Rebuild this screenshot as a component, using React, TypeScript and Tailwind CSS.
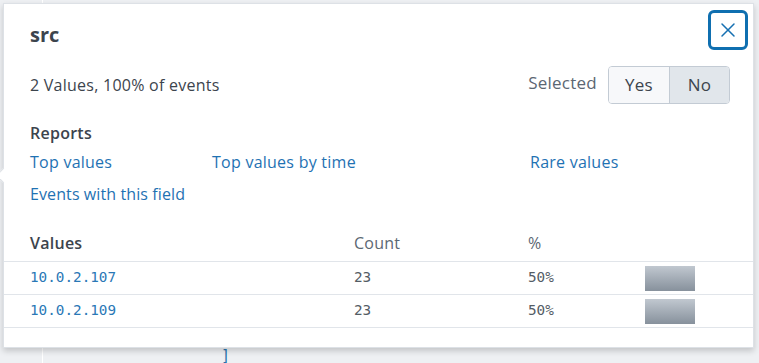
import { X } from "lucide-react";

const rows = [
  { value: "10.0.2.107", count: 23, pct: "50%" },
  { value: "10.0.2.109", count: 23, pct: "50%" },
];

export default function App() {
  return (
    <div className="relative w-[759px] h-[363px] overflow-hidden bg-[#eef0f3] font-['Open_Sans',sans-serif] text-[#3c444d] tracking-[0.25px]">
      {/* page behind the popover */}
      <div className="flex h-full">
        <div className="w-[43px] border-r border-white" />
        <div className="flex-1 pl-[178px] pt-[346px] font-['DejaVu_Sans_Mono',monospace] text-[15px] leading-5 text-[#2a73ad]">]</div>
      </div>

      {/* field popover */}
      <div className="absolute left-[3px] top-[3px] w-[751px] h-[345px] bg-white border border-[#dde1e6] shadow-[0_3px_6px_rgba(0,0,0,0.18)]">
        {/* arrow */}
        <div className="absolute -left-[6px] top-[166px] w-[11px] h-[11px] rotate-45 bg-white border-l border-b border-[#dde1e6]" />

        <button className="absolute right-[5px] top-[6px] w-[40px] h-[40px] rounded-[6px] border-[3px] border-[#0f6fb0] bg-white flex items-center justify-center">
          <X className="w-[24px] h-[24px] text-[#1670b2]" strokeWidth={1.5} />
        </button>

        <div className="pt-[17px] pl-[26px] pr-[23px]">
          <h2 className="text-[20px] leading-[28px] font-bold tracking-normal">src</h2>

          <div className="mt-[17px] h-[38px] flex items-center justify-between">
            <span className="text-[16px]">2 Values, 100% of events</span>
            <div className="flex items-center">
              <span className="text-[17px] text-[#5c6773] mr-[11px] mb-[5px]">Selected</span>
              <div className="flex h-[38px] rounded-[4px] border border-[#c3cbd4] overflow-hidden text-[17px]">
                <button className="w-[61px] bg-[#f7f8fa] border-r border-[#c3cbd4]">Yes</button>
                <button className="w-[59px] bg-[#e1e6eb]">No</button>
              </div>
            </div>
          </div>

          <div className="mt-[19px] text-[16px] leading-5 font-semibold">Reports</div>
          <div className="mt-[9px] grid grid-cols-[182px_318px_1fr] gap-y-[12px] text-[16px] leading-5 text-[#1f72b3]">
            <a>Top values</a>
            <a>Top values by time</a>
            <a>Rare values</a>
            <a className="tracking-[0.1px]">Events with this field</a>
          </div>
        </div>

        <div className="mt-[21px] text-[16px]">
          <div className="grid grid-cols-[350px_174px_117px_1fr] h-[37px] items-center border-b border-[#e1e5ea]">
            <span className="pl-[26px] font-semibold">Values</span>
            <span className="text-[#5c6773]">Count</span>
            <span className="text-[#5c6773]">%</span>
            <span />
          </div>
          {rows.map((r) => (
            <div key={r.value} className="grid grid-cols-[350px_174px_117px_1fr] h-[33px] items-center border-b border-[#e1e5ea] font-['DejaVu_Sans_Mono',monospace] text-[14.3px] tracking-normal">
              <span className="pl-[26px] text-[#2a78b6]">{r.value}</span>
              <span className="text-[#545c65]">{r.count}</span>
              <span className="text-[#545c65]">{r.pct}</span>
              <div className="w-[50px] h-[25px] bg-gradient-to-b from-[#c1c8d0] to-[#87919c]" />
            </div>
          ))}
        </div>
      </div>
    </div>
  );
}
